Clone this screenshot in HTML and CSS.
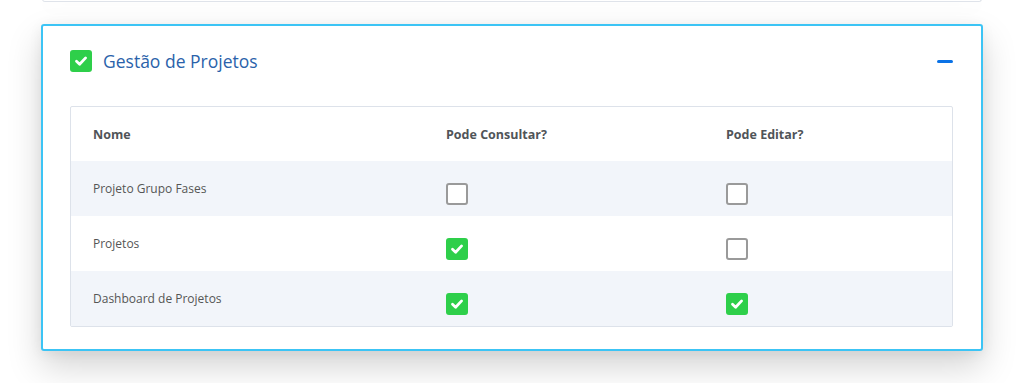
FILE: index.html
```html
<!DOCTYPE html>
<html lang="pt-BR">
<head>
  <meta charset="UTF-8">
  <meta name="viewport" content="width=device-width, initial-scale=1.0">
  <title>Permissões</title>
  <link rel="stylesheet" href="styles.css">
</head>
<body>
  <div class="card card-prev"></div>

  <div class="card card-active">
    <div class="card-header">
      <span class="check checked">
        <svg viewBox="0 0 16 16"><path d="M3.5 8.3 6.6 11.2 12.6 4.9" /></svg>
      </span>
      <span class="card-title">Gestão de Projetos</span>
      <span class="collapse"></span>
    </div>

    <div class="perm-table">
      <div class="row row-head">
        <div class="cell col-name">Nome</div>
        <div class="cell col-view">Pode Consultar?</div>
        <div class="cell col-edit">Pode Editar?</div>
      </div>
      <div class="row striped">
        <div class="cell col-name">Projeto Grupo Fases</div>
        <div class="cell col-view"><span class="check"></span></div>
        <div class="cell col-edit"><span class="check"></span></div>
      </div>
      <div class="row">
        <div class="cell col-name">Projetos</div>
        <div class="cell col-view"><span class="check checked"><svg viewBox="0 0 16 16"><path d="M3.5 8.3 6.6 11.2 12.6 4.9" /></svg></span></div>
        <div class="cell col-edit"><span class="check"></span></div>
      </div>
      <div class="row striped">
        <div class="cell col-name">Dashboard de Projetos</div>
        <div class="cell col-view"><span class="check checked"><svg viewBox="0 0 16 16"><path d="M3.5 8.3 6.6 11.2 12.6 4.9" /></svg></span></div>
        <div class="cell col-edit"><span class="check checked"><svg viewBox="0 0 16 16"><path d="M3.5 8.3 6.6 11.2 12.6 4.9" /></svg></span></div>
      </div>
    </div>
  </div>
</body>
</html>
```

FILE: styles.css
```css
html,
body {
  height: 100%;
}
body {
  margin: 0;
  background-color: #fff;
  font-family: "Open Sans", "Noto Sans", sans-serif;
}
.card {
  background-color: #fff;
  margin: 0 42px;
}
.card-prev {
  height: 2px;
  border: 1px solid #dfe3ea;
  border-top: none;
  border-radius: 0 0 3px 3px;
  margin-top: -1px;
  box-shadow: 0 4px 18px rgba(0, 0, 0, 0.06);
}
.card-active {
  margin: 22px 41px 0 41px;
  border: 2px solid #3cc4f5;
  border-radius: 3px;
  padding: 0 28px 22px 27px;
  box-shadow: 0 16px 34px rgba(0, 0, 0, 0.17), 0 2px 14px rgba(0, 0, 0, 0.06);
}
.card-header {
  display: flex;
  align-items: center;
  height: 67px;
  padding-top: 1px;
  margin-bottom: 12px;
}
.card-title {
  margin-left: 11px;
  font-size: 17.5px;
  color: #2b62aa;
  flex: 1;
}
.collapse {
  width: 16px;
  height: 3px;
  border-radius: 2px;
  background-color: #0a72e6;
  margin-top: 1px;
}
.check {
  display: inline-flex;
  align-items: center;
  justify-content: center;
  box-sizing: border-box;
  width: 22px;
  height: 22px;
  border: 2px solid #9a9a9a;
  border-radius: 3px;
  background-color: #fff;
}
.check.checked {
  border: none;
  background-color: #2ecf4a;
}
.check svg {
  width: 16px;
  height: 16px;
  fill: none;
  stroke: #fff;
  stroke-width: 2.8;
  stroke-linecap: round;
  stroke-linejoin: round;
}
.perm-table {
  border: 1px solid #dde2ea;
  border-radius: 2px;
}
.row {
  display: flex;
  align-items: center;
  height: 55px;
}
.row-head {
  height: 54px;
}
.striped {
  background-color: #f2f5fa;
}
.cell {
  box-sizing: border-box;
  padding-left: 22px;
  font-size: 12px;
  color: #555;
}
.row-head .cell {
  font-weight: 700;
  font-size: 12.5px;
  color: #505458;
}
.col-name {
  width: 353px;
}
.col-view {
  width: 280px;
}
.col-edit {
  flex: 1;
}
.row:not(.row-head) .col-view,
.row:not(.row-head) .col-edit {
  padding-top: 10px;
  display: flex;
}
```
